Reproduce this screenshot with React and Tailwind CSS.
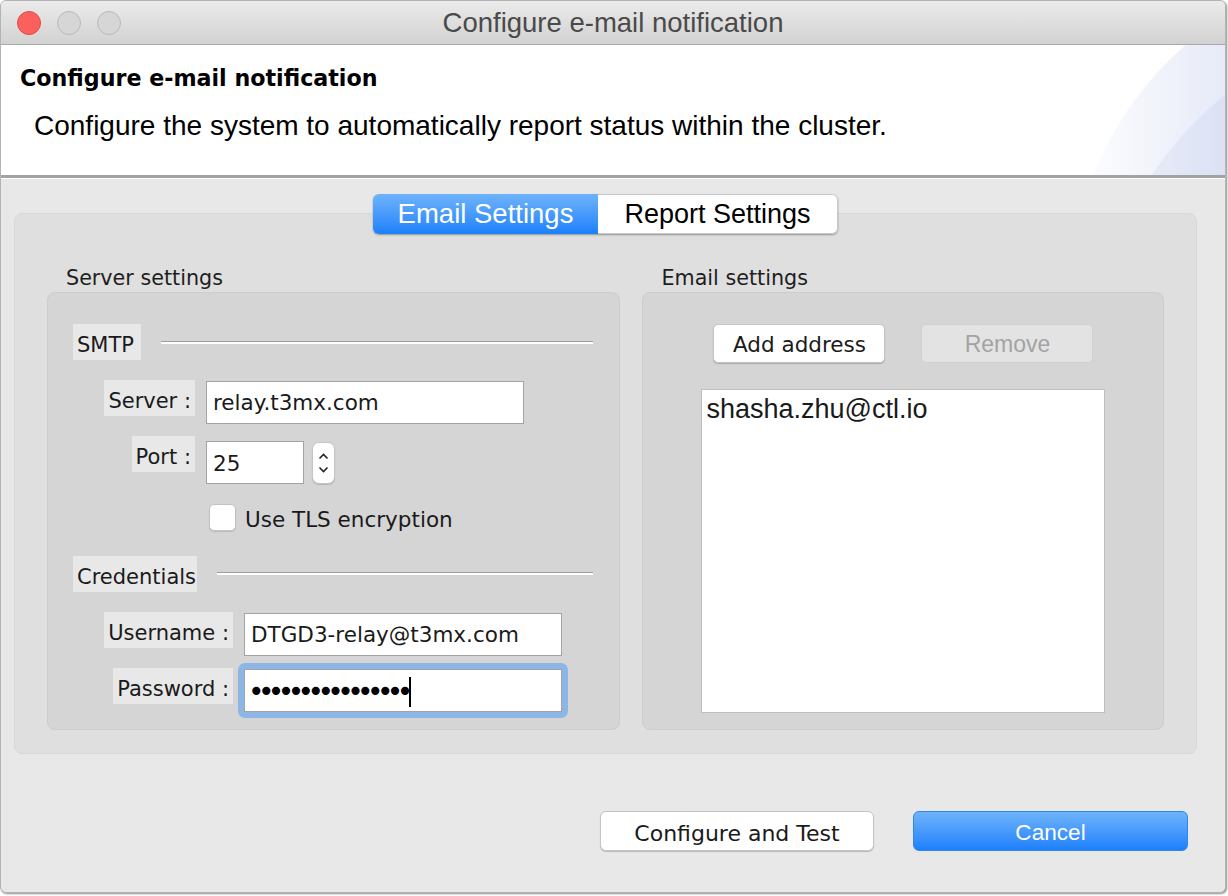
import React from "react";

const lucida = { fontFamily: '"DejaVu Sans", "Noto Sans", sans-serif' };
const helv = { fontFamily: '"Liberation Sans", Arial, sans-serif' };

const Label = ({ children, className = "" }) => (
  <div
    className={`h-[36px] flex items-center px-[4px] pt-[8px] bg-[#e8e8e8] text-[21px] text-[#1a1a1a] ${className}`}
    style={lucida}
  >
    {children}
  </div>
);

const Field = ({ children, className = "" }) => (
  <div
    className={`h-[43px] bg-white border border-[#a3a3a3] flex items-center pl-[6px] pt-[2px] text-[21.5px] text-[#1a1a1a] ${className}`}
    style={lucida}
  >
    {children}
  </div>
);

const Etched = ({ className = "" }) => (
  <div className={`flex-1 h-[3px] border-t border-[#9d9d9d] bg-white ${className}`} />
);

const Spinner = () => (
  <div className="w-[23px] h-[42px] bg-white rounded-[7px] border border-[#c4c4c4] shadow-[0_1px_1px_rgba(0,0,0,0.15)] flex flex-col items-center justify-center gap-[6px]">
    <svg width="11" height="7" viewBox="0 0 11 7">
      <path d="M1.5 5.5 L5.5 1.5 L9.5 5.5" fill="none" stroke="#222" strokeWidth="1.6" />
    </svg>
    <svg width="11" height="7" viewBox="0 0 11 7">
      <path d="M1.5 1.5 L5.5 5.5 L9.5 1.5" fill="none" stroke="#222" strokeWidth="1.6" />
    </svg>
  </div>
);

export default function App() {
  return (
    <div className="w-[1228px] h-[896px] bg-white">
      <div className="w-[1226px] h-[893px] rounded-[6px] overflow-hidden border border-[#b4b4b4] shadow-[1px_1px_2px_rgba(0,0,0,0.45)] bg-[#e8e8e8] flex flex-col">
        {/* title bar */}
        <div className="relative h-[44px] shrink-0 bg-gradient-to-b from-[#ebebeb] to-[#d2d2d2] border-b border-[#a9a9a9] flex items-center">
          <div className="flex items-center gap-[16px] pl-[16px]">
            <div className="w-[24px] h-[24px] rounded-full bg-[#fc605c] border border-[#de4a45]" />
            <div className="w-[24px] h-[24px] rounded-full bg-[#d6d6d6] border border-[#bababa]" />
            <div className="w-[24px] h-[24px] rounded-full bg-[#d6d6d6] border border-[#bababa]" />
          </div>
          <div
            className="absolute inset-0 flex items-center justify-center text-[27.5px] text-[#4a4a4a]"
            style={helv}
          >
            Configure e-mail notification
          </div>
        </div>

        {/* header */}
        <div className="relative h-[133px] shrink-0 bg-white border-b-[3px] border-[#a3a3a3] overflow-hidden">
          <div className="absolute left-[1070px] top-[-80px] w-[660px] h-[660px] rounded-full bg-[linear-gradient(to_right,#ffffff_0%,#e6eaf8_24%)]" />
          <div className="absolute left-[1090px] top-[-30px] w-[720px] h-[720px] rounded-full bg-[linear-gradient(to_right,#f0f2fb_0%,#dbe1f4_19%)]" />
          <div className="relative pl-[19px] pt-[20px]">
            <div className="text-[22.2px] font-bold text-black leading-[26px]" style={lucida}>
              Configure e-mail notification
            </div>
            <div className="pl-[14px] mt-[19px] text-[28px] text-black leading-[32px]" style={helv}>
              Configure the system to automatically report status within the cluster.
            </div>
          </div>
        </div>
        <div className="h-[1px] bg-white shrink-0" />

        {/* body */}
        <div className="flex-1 flex flex-col px-[13px] pt-[15px]">
          <div className="relative z-10 flex justify-center pr-[15px]">
            <div className="flex h-[40px] rounded-[6px] shadow-[0_1px_2px_rgba(0,0,0,0.35)] overflow-hidden" style={helv}>
              <div className="w-[225px] flex items-center justify-center text-white text-[27.5px] bg-gradient-to-b from-[#6db3fa] to-[#1a80fb]">
                Email Settings
              </div>
              <div className="w-[240px] flex items-center justify-center text-black text-[27px] bg-white border border-l-0 border-[#c8c8c8] rounded-r-[6px]">
                Report Settings
              </div>
            </div>
          </div>

          <div className="-mt-[21px] w-[1183px] h-[541px] rounded-[8px] bg-[#dfdfdf] border border-[#d8d8d8] flex gap-[22px] px-[32px] pt-[49px]">
            {/* server settings */}
            <div className="w-[574px] flex flex-col">
              <div className="pl-[19px] h-[29px] text-[20.7px] text-[#1e1e1e] leading-[30px]" style={lucida}>
                Server settings
              </div>
              <div className="h-[438px] rounded-[8px] bg-[#d5d5d5] border border-[#cdcdcd] flex flex-col pl-[25px] pt-[31px]">
                <div className="flex items-center">
                  <Label className="w-[68px]">SMTP</Label>
                  <Etched className="ml-[20px] mr-[26px]" />
                </div>

                <div className="flex items-start mt-[20px]">
                  <div className="w-[122px] flex justify-end">
                    <Label>Server :</Label>
                  </div>
                  <Field className="ml-[11px] mt-[1px] w-[318px]">relay.t3mx.com</Field>
                </div>

                <div className="flex items-start mt-[12px]">
                  <div className="w-[122px] flex justify-end">
                    <Label>Port :</Label>
                  </div>
                  <Field className="ml-[11px] mt-[5px] w-[98px] pt-[4px]">25</Field>
                  <div className="ml-[8px] mt-[6px]">
                    <Spinner />
                  </div>
                </div>

                <div className="flex items-center h-[27px] mt-[20px] ml-[136px]">
                  <div className="w-[27px] h-[27px] rounded-[5px] bg-white border border-[#c2c2c2] shadow-[0_1px_1px_rgba(0,0,0,0.12)]" />
                  <div className="ml-[9px] pt-[5px] text-[21.5px] text-[#1a1a1a]" style={lucida}>
                    Use TLS encryption
                  </div>
                </div>

                <div className="flex items-center mt-[25px]">
                  <Label className="w-[124px]">Credentials</Label>
                  <Etched className="ml-[20px] mr-[26px] mt-[-2px]" />
                </div>

                <div className="flex items-start mt-[20px]">
                  <div className="w-[160px] flex justify-end">
                    <Label>Username :</Label>
                  </div>
                  <Field className="ml-[11px] mt-[1px] w-[318px]">DTGD3-relay@t3mx.com</Field>
                </div>

                <div className="flex items-start mt-[12px]">
                  <div className="w-[160px] flex justify-end">
                    <Label>Password :</Label>
                  </div>
                  <div className="ml-[5px] -mt-[5px] p-[6px] rounded-[7px] bg-[#8cb6e6]">
                    <Field className="w-[318px] border-[#9fb4cc] pl-0">
                      <span className="-ml-[3px] tracking-[-6.6px] text-[28px] leading-none text-black">••••••••••••••••</span>
                      <span className="ml-[2px] w-[2px] h-[30px] bg-black" />
                    </Field>
                  </div>
                </div>
              </div>
            </div>

            {/* email settings */}
            <div className="w-[522px] flex flex-col">
              <div className="pl-[19px] h-[29px] text-[20.7px] text-[#1e1e1e] leading-[30px]" style={lucida}>
                Email settings
              </div>
              <div className="h-[438px] rounded-[8px] bg-[#d5d5d5] border border-[#cdcdcd] flex flex-col pt-[31px]">
                <div className="flex pl-[70px] gap-[36px]">
                  <div
                    className="w-[172px] h-[39px] rounded-[5px] bg-white border border-[#c4c4c4] shadow-[0_1px_1px_rgba(0,0,0,0.2)] flex items-center justify-center pt-[3px] text-[21.5px] text-[#1a1a1a]"
                    style={lucida}
                  >
                    Add address
                  </div>
                  <div
                    className="w-[172px] h-[39px] rounded-[5px] bg-[#e3e3e3] border border-[#d0d0d0] flex items-center justify-center pt-[2px] text-[23px] text-[#a3a3a3]"
                    style={helv}
                  >
                    Remove
                  </div>
                </div>
                <div className="mt-[26px] ml-[58px] w-[404px] h-[324px] bg-white border border-[#bfbfbf] px-[4px] pt-[3px]">
                  <div className="text-[27px] text-[#1a1a1a] leading-[32px]" style={helv}>
                    shasha.zhu@ctl.io
                  </div>
                </div>
              </div>
            </div>
          </div>

          {/* footer buttons */}
          <div className="flex justify-end gap-[39px] mt-[57px] pr-[24px]">
            <div
              className="w-[274px] h-[40px] rounded-[6px] bg-white border border-[#c4c4c4] shadow-[0_1px_1px_rgba(0,0,0,0.2)] flex items-center justify-center pt-[4px] text-[22px] text-[#1a1a1a]"
              style={lucida}
            >
              Configure and Test
            </div>
            <div
              className="w-[275px] h-[40px] rounded-[6px] bg-gradient-to-b from-[#6db3fa] to-[#1a80fb] border border-[#2f86f0] flex items-center justify-center pt-[3px] text-[22.6px] text-white"
              style={helv}
            >
              Cancel
            </div>
          </div>
        </div>
      </div>
    </div>
  );
}
